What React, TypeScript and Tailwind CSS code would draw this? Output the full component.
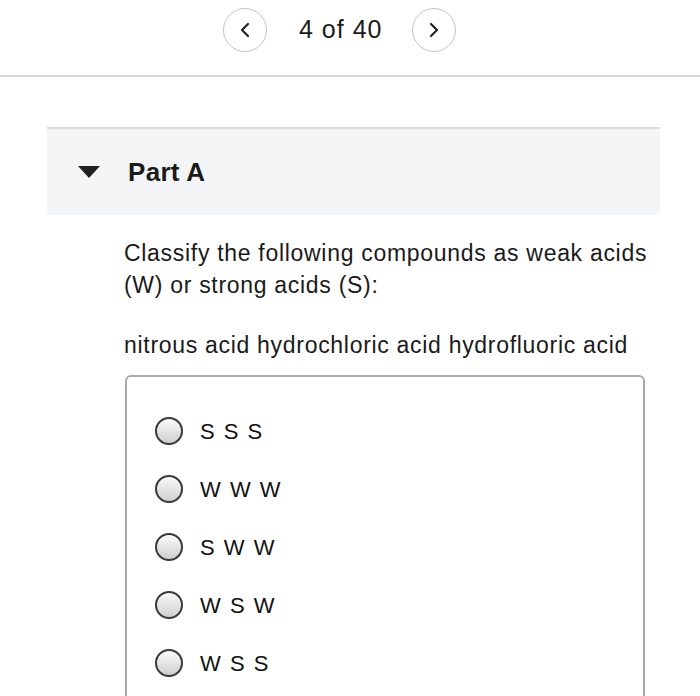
import { ChevronLeft, ChevronRight } from "lucide-react";

const OPTIONS = ["S S S", "W W W", "S W W", "W S W", "W S S"];

function Radio() {
  return (
    <span className="block w-[28px] h-[28px] rounded-full border-2 border-[#3a3a3a] bg-gradient-to-b from-[#fafafa] to-[#cfcfcf] shrink-0" />
  );
}

export default function App() {
  return (
    <div className="w-[700px] h-[696px] overflow-hidden bg-white text-[#1a1a1a] font-['Liberation_Sans',Arial,sans-serif]">
      {/* Pager */}
      <div className="flex items-center h-[58px] pt-[2px] pl-[223px]">
        <button className="w-[44px] h-[44px] rounded-full border border-[#c4c4c4] flex items-center justify-center text-[#222]">
          <ChevronLeft className="w-[24px] h-[24px]" strokeWidth={2.2} />
        </button>
        <span className="ml-[32px] mr-[30px] text-[25px] tracking-[1px]">4 of 40</span>
        <button className="w-[44px] h-[44px] rounded-full border border-[#c4c4c4] flex items-center justify-center text-[#222]">
          <ChevronRight className="w-[24px] h-[24px]" strokeWidth={2.2} />
        </button>
      </div>
      <div className="mt-[17px] border-t-2 border-[#d9d9d9]" />

      {/* Part header */}
      <div className="mt-[50px] ml-[47px] w-[613px] border-t-2 border-[#dcdcdc] bg-[#f3f5f6] h-[88px] flex items-center">
        <svg width="24" height="14" viewBox="0 0 24 14" className="ml-[30px]">
          <path d="M1 1 L23 1 L12 13 Z" fill="#222" />
        </svg>
        <span className="ml-[27px] text-[26px] font-bold tracking-[0.3px]">Part A</span>
      </div>

      {/* Question */}
      <div className="ml-[124px] mr-[30px] mt-[22px] text-[23px] leading-[32px] tracking-[0.7px]">
        <p>
          Classify the following compounds as weak acids
          <br />
          (W) or strong acids (S):
        </p>
        <p className="mt-[28px]">nitrous acid hydrochloric acid hydrofluoric acid</p>
      </div>

      <div className="ml-[125px] w-[520px] mt-[14px] h-[400px] border-2 border-[#a9a9a9] rounded-[6px] pt-[40px] pl-[28px]">
        <div className="flex flex-col gap-[30px]">
          {OPTIONS.map((o) => (
            <label key={o} className="flex items-center h-[28px]">
              <Radio />
              <span className="ml-[17px] text-[22px] tracking-[1.5px] text-[#111]">{o}</span>
            </label>
          ))}
        </div>
      </div>
    </div>
  );
}
